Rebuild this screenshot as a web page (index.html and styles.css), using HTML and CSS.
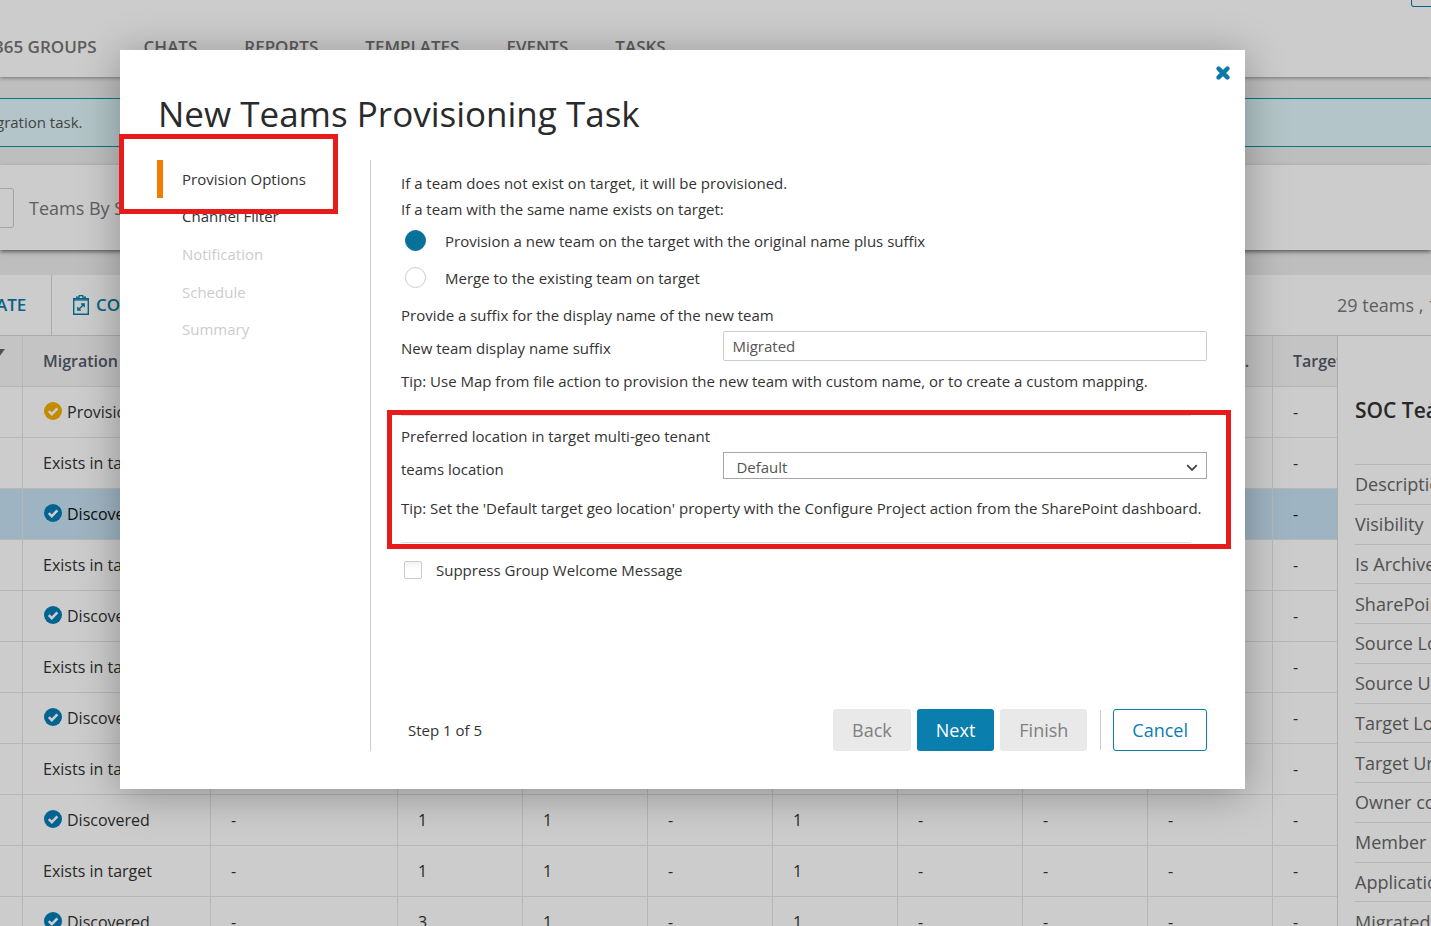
FILE: index.html
```html
<!DOCTYPE html>
<html lang="en">
<head>
<meta charset="utf-8">
<title>New Teams Provisioning Task</title>
<link rel="stylesheet" href="styles.css">
</head>
<body>
<svg class="sprite" aria-hidden="true">
  <symbol id="check" viewBox="0 0 18 18"><circle cx="9" cy="9" r="9"/><path d="M4.8 9.2l3 3 5.6-5.8" fill="none" stroke="#fff" stroke-width="2.6"/></symbol>
</svg>
<div class="page">
  <header class="top">
    <nav class="tabs">
      <a href="#">365 GROUPS</a><a href="#">CHATS</a><a href="#">REPORTS</a><a href="#">TEMPLATES</a><a href="#">EVENTS</a><a href="#">TASKS</a>
    </nav>
    <button class="top-btn" aria-label="Account"></button>
  </header>
  <div class="banner">gration task.</div>
  <section class="search">
    <input class="search-box" aria-label="Search">
    <span>Teams By Status</span>
  </section>
  <section class="board">
    <div class="toolbar">
      <button class="tool tool-first">ATE</button>
      <button class="tool">
        <svg width="16" height="20" viewBox="0 0 16 20" fill="none" stroke="currentColor"><path d="M.7 3.700h14.600v15.600H.7z" stroke-width="1.400"/><path d="M1 5h14" stroke-width="1.200"/><path d="M3.600 3.700V2.200h2.600V.6h3.600v1.600h2.600v1.500" stroke-width="1.200"/><path d="M5 15l6-5.800M8 9h3.200v3.200M4.800 12v3.200H8" stroke-width="1.300"/></svg>
        COLLECT
      </button>
      <span class="count">29 teams , 1 selected</span>
    </div>
    <div class="split">
      <div class="grid-wrap">
        <table class="grid">
          <colgroup><col class="c-sel"><col class="c-status"><col class="c-task"><col><col><col><col><col><col><col><col></colgroup>
          <thead><tr><th><svg class="filter" width="12" height="8" viewBox="0 0 12 8"><path d="M0 0h12L6 8z"/></svg></th><th>Migration Status</th><th></th><th></th><th></th><th></th><th></th><th></th><th></th><th class="dots">...</th><th>Target Url</th></tr></thead>
          <tbody>
            <tr><td></td><td><svg class="ico warn"><use href="#check"/></svg>Provisioned</td><td>-</td><td>1</td><td>1</td><td>-</td><td>1</td><td>-</td><td>-</td><td>-</td><td>-</td></tr>
            <tr><td></td><td>Exists in target</td><td>-</td><td>1</td><td>1</td><td>-</td><td>1</td><td>-</td><td>-</td><td>-</td><td>-</td></tr>
            <tr class="picked"><td></td><td><svg class="ico"><use href="#check"/></svg>Discovered</td><td>-</td><td>1</td><td>1</td><td>-</td><td>1</td><td>-</td><td>-</td><td>-</td><td>-</td></tr>
            <tr><td></td><td>Exists in target</td><td>-</td><td>1</td><td>1</td><td>-</td><td>1</td><td>-</td><td>-</td><td>-</td><td>-</td></tr>
            <tr><td></td><td><svg class="ico"><use href="#check"/></svg>Discovered</td><td>-</td><td>1</td><td>1</td><td>-</td><td>1</td><td>-</td><td>-</td><td>-</td><td>-</td></tr>
            <tr><td></td><td>Exists in target</td><td>-</td><td>1</td><td>1</td><td>-</td><td>1</td><td>-</td><td>-</td><td>-</td><td>-</td></tr>
            <tr><td></td><td><svg class="ico"><use href="#check"/></svg>Discovered</td><td>-</td><td>1</td><td>1</td><td>-</td><td>1</td><td>-</td><td>-</td><td>-</td><td>-</td></tr>
            <tr><td></td><td>Exists in target</td><td>-</td><td>1</td><td>1</td><td>-</td><td>1</td><td>-</td><td>-</td><td>-</td><td>-</td></tr>
            <tr><td></td><td><svg class="ico"><use href="#check"/></svg>Discovered</td><td>-</td><td>1</td><td>1</td><td>-</td><td>1</td><td>-</td><td>-</td><td>-</td><td>-</td></tr>
            <tr><td></td><td>Exists in target</td><td>-</td><td>1</td><td>1</td><td>-</td><td>1</td><td>-</td><td>-</td><td>-</td><td>-</td></tr>
            <tr><td></td><td><svg class="ico"><use href="#check"/></svg>Discovered</td><td>-</td><td>3</td><td>1</td><td>-</td><td>1</td><td>-</td><td>-</td><td>-</td><td>-</td></tr>
          </tbody>
        </table>
      </div>
      <aside class="details">
        <h2>SOC Team</h2>
        <ul>
          <li>Description</li><li>Visibility</li><li>Is Archived</li><li>SharePoint</li><li>Source Location</li><li>Source Url</li><li>Target Location</li><li>Target Url</li><li>Owner count</li><li>Member count</li><li>Application</li><li>Migrated</li>
        </ul>
      </aside>
    </div>
  </section>
</div>

<div class="overlay">
  <form class="modal" role="dialog" aria-labelledby="title">
    <button type="button" class="close" aria-label="Close"><svg width="14" height="14" viewBox="0 0 14 14"><path d="M2.600 2.600l8.800 8.800M11.400 2.600l-8.800 8.800" stroke="#0a7ba9" stroke-width="4.400" stroke-linecap="round"/></svg></button>
    <h1 id="title">New Teams Provisioning Task</h1>
    <div class="body">
      <ol class="steps">
        <li class="current">Provision Options</li><li>Channel Filter</li><li class="later">Notification</li><li class="later">Schedule</li><li class="later">Summary</li>
      </ol>
      <div class="pane">
        <p>If a team does not exist on target, it will be provisioned.</p>
        <p>If a team with the same name exists on target:</p>
        <label class="option"><input type="radio" name="mode" checked>Provision a new team on the target with the original name plus suffix</label>
        <label class="option"><input type="radio" name="mode">Merge to the existing team on target</label>
        <p class="lead">Provide a suffix for the display name of the new team</p>
        <div class="field"><label for="suffix">New team display name suffix</label><input id="suffix" class="text" value="Migrated"></div>
        <p class="tip">Tip: Use Map from file action to provision the new team with custom name, or to create a custom mapping.</p>
        <hr>
        <div class="geo">
          <p>Preferred location in target multi-geo tenant</p>
          <div class="field"><label for="geo">teams location</label>
            <div class="picker"><select id="geo"><option>Default</option></select><svg width="12" height="8" viewBox="0 0 12 8"><path d="M1.200 1.200L6 6l4.800-4.800" fill="none" stroke="#444" stroke-width="1.800"/></svg></div>
          </div>
          <p class="geo-tip">Tip: Set the 'Default target geo location' property with the Configure Project action from the SharePoint dashboard.</p>
        </div>
        <hr>
        <label class="check"><input type="checkbox">Suppress Group Welcome Message</label>
        <footer class="actions">
          <span class="step">Step 1 of 5</span>
          <button type="button" class="btn" disabled>Back</button>
          <button type="button" class="btn primary">Next</button>
          <button type="button" class="btn" disabled>Finish</button>
          <span class="sep"></span>
          <button type="button" class="btn outline">Cancel</button>
        </footer>
      </div>
    </div>
    <div class="mark mark-step"></div>
    <div class="mark mark-geo"></div>
  </form>
</div>
</body>
</html>
```
FILE: styles.css
```css
* { box-sizing: border-box; }
body {
  margin: 0;
  height: 100vh;
  overflow: hidden;
  position: relative;
  background: #eee;
  color: #333;
  font: 15px/24px "Open Sans", "Noto Sans", sans-serif;
}
button, input, select { font: inherit; }
h1, h2, p, ul, ol { margin: 0; padding: 0; }
li { list-style: none; }
.sprite { display: none; }

.page { height: 100%; display: flex; flex-direction: column; overflow: hidden; }
.top {
  flex: none;
  height: 77px;
  display: flex;
  justify-content: space-between;
  background: #fff;
  box-shadow: 0 1px 4px rgba(0, 0, 0, .4);
}
.tabs { display: flex; gap: 47px; padding-top: 35px; margin-left: -6px; white-space: nowrap; }
.tabs a { color: #737373; font-size: 17px; font-weight: 600; text-decoration: none; }
.top-btn { width: 30px; height: 7px; margin-right: -10px; padding: 0; background: none; border: 1px solid #0a7ba9; border-top: 0; border-radius: 0 0 3px 3px; }
.banner {
  flex: none;
  height: 49px;
  margin-top: 21px;
  line-height: 47px;
  background: #e0f7fb;
  border: solid #0097a5;
  border-width: 1px 0;
  color: #555;
  text-indent: -4px;
}
.search {
  flex: none;
  display: flex;
  align-items: center;
  gap: 15px;
  height: 85px;
  margin-top: 18px;
  background: #fff;
  box-shadow: 0 2px 4px rgba(0, 0, 0, .5);
  color: #777;
  font-size: 18px;
}
.search-box { width: 34px; height: 40px; margin-left: -20px; border: 1px solid #ccc; border-radius: 3px; }
.board { flex: 1; min-height: 0; margin-top: 25px; display: flex; flex-direction: column; background: #fff; }
.toolbar { flex: none; display: flex; height: 61px; border-bottom: 1px solid #d8d8d8; white-space: nowrap; }
.tool {
  display: flex;
  align-items: center;
  gap: 7px;
  padding: 0 20px 0 21px;
  border: 0;
  background: none;
  color: #087da8;
  font-size: 17px;
  font-weight: 600;
}
.tool-first { width: 56px; margin-left: -4px; padding: 0; border-right: 1px solid #d8d8d8; }
.count { margin-left: auto; width: 94px; align-self: center; font-size: 18px; color: #777; }

.split { flex: 1; min-height: 0; display: flex; }
.grid-wrap { flex: 1; min-width: 0; overflow: hidden; }
.grid { width: 1398px; table-layout: fixed; border-collapse: separate; border-spacing: 0; font-size: 16px; }
.c-sel { width: 23px; }
.c-status { width: 188px; }
.c-task { width: 187px; }
.grid th, .grid td {
  height: 51px;
  padding: 0 0 0 20px;
  border: solid #e4e4e4;
  border-width: 0 1px 1px 0;
  text-align: left;
  white-space: nowrap;
  overflow: hidden;
}
.grid th { background: #f5f5f5; color: #545a68; font-weight: 600; }
.grid th:first-child { padding: 0; }
.grid .dots { padding-left: 88px; }
.filter { display: block; margin: -12px 0 0 -7px; fill: #666; }
.picked td { background: #c7e1f3; color: #111; }
.ico { width: 18px; height: 18px; margin: 0 5px 0 1px; vertical-align: -2px; fill: #007cb5; }
.warn { fill: #f4b000; }
.details { flex: none; width: 94px; border-left: 1px solid #d8d8d8; padding: 62px 0 0 17px; white-space: nowrap; overflow: hidden; color: #666; font-size: 18px; }
.details h2 { color: #333; font-size: 21px; font-weight: 600; margin-bottom: 42px; line-height: 24px; }
.details ul { display: grid; grid-auto-rows: 1fr; height: 477px; }
.details li { border-top: 1px solid #e4e4e4; display: flex; align-items: center; }

.overlay { position: absolute; inset: 0; padding: 50px 186px 0 120px; background: rgba(0, 0, 0, .2); }
.modal { position: relative; padding: 38px 38px 38px 37px; background: #fff; box-shadow: 0 5px 40px rgba(0, 0, 0, .3); }
.close { position: absolute; top: 16px; right: 15px; width: 14px; height: 14px; padding: 0; border: 0; background: none; }
.close svg { display: block; }
h1 { padding-left: 1px; font-size: 35px; font-weight: 400; line-height: 52px; color: #2a2a2a; margin-bottom: 20px; }
.body { display: flex; }
.steps { flex: none; width: 213px; display: grid; grid-auto-rows: 1fr; height: 188px; }
.steps li { display: flex; align-items: center; padding-left: 25px; }
.steps .current { padding-left: 19px; border-left: 6px solid #f57c00; }
.steps .later { color: #ccc; }
.pane { flex: 1; padding: 10px 0 0 30px; border-left: 1px solid #ccc; }
.pane p { line-height: 26px; }
.pane hr { height: 1px; margin: 0 16px 0 0; border: 0; background: #ddd; }
.option { display: flex; align-items: center; gap: 19px; height: 37px; padding-left: 4px; }
.option input { appearance: none; width: 21px; height: 21px; margin: 0; border: 1px solid #ccc; border-radius: 50%; }
.option input:checked { border-color: #087199; background: #087199; }
.pane .lead { margin-top: 6px; }
.field { display: grid; grid-template-columns: 2fr 3fr; margin-top: 3px; }
.field label { padding-top: 5px; }
.text { height: 30px; width: 100%; padding: 0 8px; border: 1px solid #ccc; border-radius: 2px; color: #555; }
.pane .tip { margin: 7px 0 21px; }
.geo { padding: 7px 0 21px; }
.pane .geo-tip { margin-top: 14px; }
.picker { position: relative; }
.picker select { appearance: none; display: block; width: 100%; height: 27px; padding: 2px 12px 0; border: 1px solid #a6a6a6; border-radius: 0; background: #fff; color: #555; }
.picker svg { position: absolute; right: 9px; top: 12px; }
.check { display: flex; align-items: center; gap: 14px; margin-top: 15px; padding-left: 3px; }
.check input { appearance: none; width: 18px; height: 18px; margin: 0; border: 1px solid #ccc; border-radius: 2px; background: linear-gradient(#f3f3f3, #fff 50%); }
.actions { display: flex; align-items: center; gap: 6px; margin-top: 127px; }
.step { margin: 0 auto 0 7px; }
.btn { height: 42px; padding: 0 19px; border: 0; border-radius: 3px; background: #e9e9e9; color: #808080; font-size: 18px; }
.primary { background: #0a7ead; color: #fff; }
.outline { padding: 0 18px; border: 1px solid #0a7ead; background: #fff; color: #0a7ead; }
.sep { width: 1px; height: 40px; margin: 0 6px 0 7px; background: #ccc; }

.mark { position: absolute; border: 5px solid #e81b1b; pointer-events: none; }
.mark-step { left: -1px; top: 84px; width: 219px; height: 80px; }
.mark-geo { left: 267px; right: 14px; top: 360px; height: 139px; }
```
